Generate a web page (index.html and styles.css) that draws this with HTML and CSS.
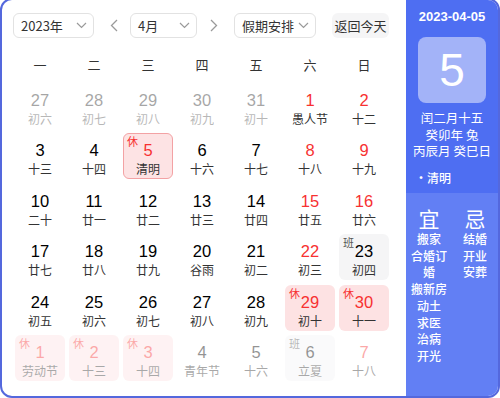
FILE: index.html
```html
<!DOCTYPE html>
<html lang="zh">
<head>
<meta charset="utf-8">
<link rel="stylesheet" href="styles.css">
</head>
<body>
<div class="card">
  <div class="main">
    <div class="toolbar">
      <div class="select sel-year"><span>2023年</span><svg class="chev" width="11" height="7" viewBox="0 0 11 7"><polyline points="1,1 5.5,5.5 10,1" fill="none" stroke="#9a9a9a" stroke-width="1.2"/></svg></div>
      <svg class="arrow arrow-l" width="8" height="13" viewBox="0 0 8 13"><polyline points="7,1 1.5,6.5 7,12" fill="none" stroke="#9a9a9a" stroke-width="1.3"/></svg>
      <div class="select sel-month"><span>4月</span><svg class="chev" width="11" height="7" viewBox="0 0 11 7"><polyline points="1,1 5.5,5.5 10,1" fill="none" stroke="#9a9a9a" stroke-width="1.2"/></svg></div>
      <svg class="arrow arrow-r" width="8" height="13" viewBox="0 0 8 13"><polyline points="1,1 6.5,6.5 1,12" fill="none" stroke="#9a9a9a" stroke-width="1.3"/></svg>
      <div class="select sel-hol"><span>假期安排</span><svg class="chev" width="11" height="7" viewBox="0 0 11 7"><polyline points="1,1 5.5,5.5 10,1" fill="none" stroke="#9a9a9a" stroke-width="1.2"/></svg></div>
      <div class="btn-today">返回今天</div>
    </div>
    <div class="weekdays">
      <span>一</span><span>二</span><span>三</span><span>四</span><span>五</span><span>六</span><span>日</span>
    </div>
    <div class="days">
      <div class="day other"><div class="num">27</div><div class="lunar">初六</div></div>
      <div class="day other"><div class="num">28</div><div class="lunar">初七</div></div>
      <div class="day other"><div class="num">29</div><div class="lunar">初八</div></div>
      <div class="day other"><div class="num">30</div><div class="lunar">初九</div></div>
      <div class="day other"><div class="num">31</div><div class="lunar">初十</div></div>
      <div class="day red"><div class="num">1</div><div class="lunar">愚人节</div></div>
      <div class="day red"><div class="num">2</div><div class="lunar">十二</div></div>

      <div class="day"><div class="num">3</div><div class="lunar">十三</div></div>
      <div class="day"><div class="num">4</div><div class="lunar">十四</div></div>
      <div class="day red rest selected"><span class="tag">休</span><div class="num">5</div><div class="lunar">清明</div></div>
      <div class="day"><div class="num">6</div><div class="lunar">十六</div></div>
      <div class="day"><div class="num">7</div><div class="lunar">十七</div></div>
      <div class="day red"><div class="num">8</div><div class="lunar">十八</div></div>
      <div class="day red"><div class="num">9</div><div class="lunar">十九</div></div>

      <div class="day"><div class="num">10</div><div class="lunar">二十</div></div>
      <div class="day"><div class="num">11</div><div class="lunar">廿一</div></div>
      <div class="day"><div class="num">12</div><div class="lunar">廿二</div></div>
      <div class="day"><div class="num">13</div><div class="lunar">廿三</div></div>
      <div class="day"><div class="num">14</div><div class="lunar">廿四</div></div>
      <div class="day red"><div class="num">15</div><div class="lunar">廿五</div></div>
      <div class="day red"><div class="num">16</div><div class="lunar">廿六</div></div>

      <div class="day"><div class="num">17</div><div class="lunar">廿七</div></div>
      <div class="day"><div class="num">18</div><div class="lunar">廿八</div></div>
      <div class="day"><div class="num">19</div><div class="lunar">廿九</div></div>
      <div class="day"><div class="num">20</div><div class="lunar">谷雨</div></div>
      <div class="day"><div class="num">21</div><div class="lunar">初二</div></div>
      <div class="day red"><div class="num">22</div><div class="lunar">初三</div></div>
      <div class="day work"><span class="tag">班</span><div class="num">23</div><div class="lunar">初四</div></div>

      <div class="day"><div class="num">24</div><div class="lunar">初五</div></div>
      <div class="day"><div class="num">25</div><div class="lunar">初六</div></div>
      <div class="day"><div class="num">26</div><div class="lunar">初七</div></div>
      <div class="day"><div class="num">27</div><div class="lunar">初八</div></div>
      <div class="day"><div class="num">28</div><div class="lunar">初九</div></div>
      <div class="day red rest"><span class="tag">休</span><div class="num">29</div><div class="lunar">初十</div></div>
      <div class="day red rest"><span class="tag">休</span><div class="num">30</div><div class="lunar">十一</div></div>

      <div class="day next red rest"><span class="tag">休</span><div class="num">1</div><div class="lunar">劳动节</div></div>
      <div class="day next red rest"><span class="tag">休</span><div class="num">2</div><div class="lunar">十三</div></div>
      <div class="day next red rest"><span class="tag">休</span><div class="num">3</div><div class="lunar">十四</div></div>
      <div class="day next"><div class="num">4</div><div class="lunar">青年节</div></div>
      <div class="day next"><div class="num">5</div><div class="lunar">十六</div></div>
      <div class="day next work"><span class="tag">班</span><div class="num">6</div><div class="lunar">立夏</div></div>
      <div class="day next red"><div class="num">7</div><div class="lunar">十八</div></div>
    </div>
  </div>
  <div class="side">
    <div class="side-top">
      <div class="side-date">2023-04-05</div>
      <div class="big-day">5</div>
      <div class="side-lunar">
        <div>闰二月十五</div>
        <div>癸卯年 兔</div>
        <div>丙辰月 癸巳日</div>
      </div>
      <div class="side-term">·清明</div>
    </div>
    <div class="side-bottom">
      <div class="yiji">
        <div class="yj-title">宜</div>
        <div class="yj-item">搬家</div>
        <div class="yj-item">合婚订婚</div>
        <div class="yj-item">搬新房</div>
        <div class="yj-item">动土</div>
        <div class="yj-item">求医</div>
        <div class="yj-item">治病</div>
        <div class="yj-item">开光</div>
      </div>
      <div class="yiji">
        <div class="yj-title">忌</div>
        <div class="yj-item">结婚</div>
        <div class="yj-item">开业</div>
        <div class="yj-item">安葬</div>
      </div>
    </div>
  </div>
</div>
</body>
</html>
```

FILE: styles.css
```css
* { box-sizing: border-box; }
html, body {
  margin: 0;
  padding: 0;
  background: #fff;
  overflow: hidden;
}
body {
  font-family: "Liberation Sans", "Noto Sans CJK SC", sans-serif;
  color: #222;
}
.card {
  display: flex;
  width: 500px;
  height: 400px;
  margin-top: -2px;
  border: 2px solid #5468dd;
  border-radius: 12px;
  overflow: hidden;
  background: #fff;
}
.main {
  width: 404px;
  padding: 13px 0 0 11px;
}
.toolbar {
  display: flex;
  align-items: center;
  height: 25px;
}
.select {
  display: flex;
  align-items: center;
  justify-content: space-between;
  height: 25px;
  border: 1px solid #e2e2e2;
  border-radius: 6px;
  padding: 0 6px 0 7px;
  font-family: "Noto Sans CJK SC", sans-serif;
  font-size: 13px;
  color: #333;
}
.sel-year { width: 81px; }
.sel-month { width: 67px; }
.sel-hol { width: 82px; color: #333; }
.arrow-l { margin-left: 16px; }
.sel-month { margin-left: 12px; }
.arrow-r { margin-left: 13px; }
.sel-hol { margin-left: 16px; }
.btn-today {
  margin-left: 16px;
  width: 57px;
  height: 25px;
  line-height: 25px;
  text-align: center;
  border-radius: 6px;
  background: #f5f5f6;
  font-family: "Noto Sans CJK SC", sans-serif;
  font-size: 13px;
  color: #333;
}
.weekdays {
  display: grid;
  grid-template-columns: repeat(7, 50px);
  column-gap: 4px;
  margin: 17px 0 0 2px;
  height: 20px;
  line-height: 20px;
  text-align: center;
  font-family: "Noto Sans CJK SC", sans-serif;
  font-size: 13px;
  color: #333;
}
.days {
  display: grid;
  grid-template-columns: repeat(7, 50px);
  grid-auto-rows: 46px;
  column-gap: 4px;
  row-gap: 4.6px;
  margin: 7.5px 0 0 2px;
}
.day {
  position: relative;
  border-radius: 6px;
  padding-top: 6px;
  text-align: center;
  border: 1px solid transparent;
}
.num {
  font-size: 16.5px;
  line-height: 20px;
  height: 20px;
  color: #000;
}
.lunar {
  font-family: "Noto Sans CJK SC", sans-serif;
  font-size: 12px;
  line-height: 17px;
  color: #333;
}
.red .num { color: #f73131; }
.other { opacity: 0.35; }
.next { opacity: 0.42; }
.rest { background: #fde2e3; }
.selected { border-color: #f3a2a4; background: #fde3e4; }
.work { background: #f5f5f6; }
.tag {
  position: absolute;
  left: 3px;
  top: 1px;
  font-family: "Noto Sans CJK SC", sans-serif;
  font-size: 11px;
  line-height: 13px;
  color: #f73131;
}
.work .tag { color: #555; }
.side {
  width: 92px;
  display: flex;
  flex-direction: column;
  color: #fff;
  font-family: "Noto Sans CJK SC", sans-serif;
}
.side-top {
  height: 193px;
  background: #4e6ef2;
  padding-top: 8px;
  display: flex;
  flex-direction: column;
  align-items: center;
}
.side-date {
  font-family: "Liberation Sans", sans-serif;
  font-weight: bold;
  font-size: 13px;
  line-height: 18px;
}
.big-day {
  margin-top: 11px;
  width: 68px;
  height: 66px;
  border-radius: 8px;
  background: #a3b3f8;
  font-family: "Liberation Sans", sans-serif;
  font-size: 46px;
  line-height: 66px;
  text-align: center;
}
.side-lunar {
  margin-top: 7px;
  font-size: 12.5px;
  line-height: 16.5px;
  text-align: center;
  white-space: nowrap;
}
.side-term {
  align-self: flex-start;
  margin: 10.5px 0 0 9px;
  font-size: 12px;
  line-height: 16px;
  font-weight: 500;
}
.side-bottom {
  flex: 1;
  background: #627ff4;
  display: flex;
  padding-top: 205px;
  padding-top: 12px;
}
.yiji {
  width: 46px;
  text-align: center;
}
.yj-title {
  font-size: 21px;
  line-height: 26px;
}
.yj-item {
  padding: 0 3px;
  font-size: 12px;
  line-height: 16.7px;
  font-weight: 500;
}
```
